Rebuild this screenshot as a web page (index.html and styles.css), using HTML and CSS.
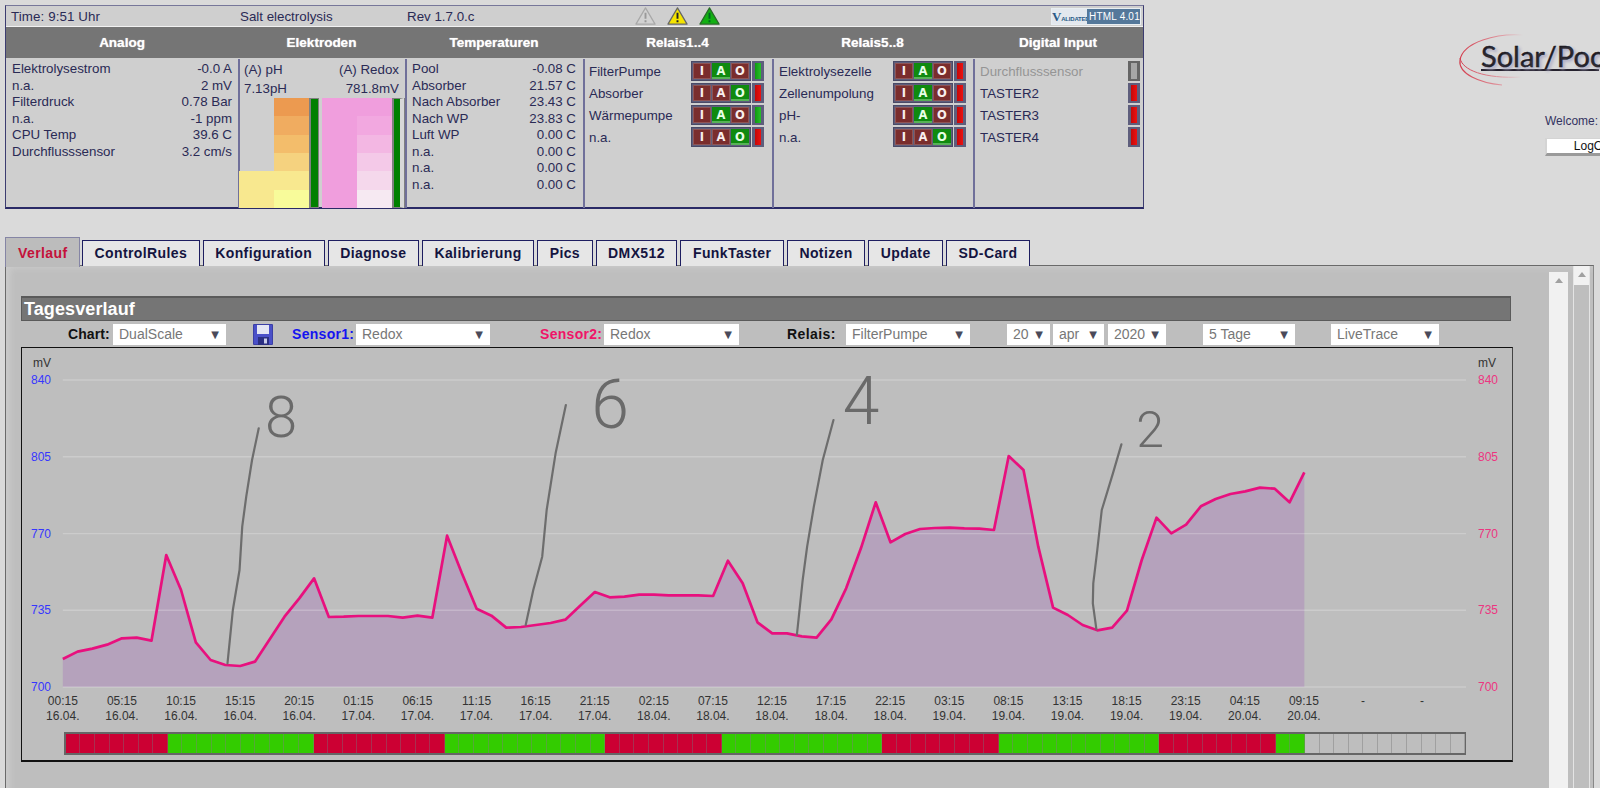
FILE: index.html
```html
<!DOCTYPE html>
<html lang="de">
<head>
<meta charset="utf-8">
<title>Salt electrolysis</title>
<link rel="stylesheet" href="styles.css">
</head>
<body>
<div class="top">
  <section class="panel">
    <div class="status">
      <span class="st-time">Time: 9:51 Uhr</span>
      <span class="st-name">Salt electrolysis</span>
      <span class="st-rev">Rev 1.7.0.c</span>
      <span class="st-icons">
        <svg class="tri" viewBox="0 0 22 20"><path d="M11 1.5 21 18.5H1Z" fill="#d2d2d2" stroke="#a8a8a8" stroke-width="1.3" stroke-linejoin="round"/><path d="M11 6.5V13M11 14.5V16.5" stroke="#999" stroke-width="2"/></svg>
        <svg class="tri" viewBox="0 0 22 20"><path d="M11 1.5 21 18.5H1Z" fill="#f5e400" stroke="#666" stroke-width="1.3" stroke-linejoin="round"/><path d="M11 6.5V13M11 14.5V16.5" stroke="#222" stroke-width="2"/></svg>
        <svg class="tri" viewBox="0 0 22 20"><path d="M11 1.5 21 18.5H1Z" fill="#12b012" stroke="#2a6a2a" stroke-width="1.3" stroke-linejoin="round"/><path d="M11 6.5V13M11 14.5V16.5" stroke="#062" stroke-width="2"/></svg>
      </span>
      <span class="valid"><span class="valid-l"><b>V</b>ALIDATED</span><span class="valid-r">HTML 4.01</span></span>
    </div>
    <div class="grid">
      <h3>Analog</h3><h3>Elektroden</h3><h3>Temperaturen</h3><h3>Relais1..4</h3><h3>Relais5..8</h3><h3>Digital Input</h3>

      <div class="cell values">
        <p><span>Elektrolysestrom</span><span>-0.0 A</span></p>
        <p><span>n.a.</span><span>2 mV</span></p>
        <p><span>Filterdruck</span><span>0.78 Bar</span></p>
        <p><span>n.a.</span><span>-1 ppm</span></p>
        <p><span>CPU Temp</span><span>39.6 C</span></p>
        <p><span>Durchflusssensor</span><span>3.2 cm/s</span></p>
      </div>

      <div class="cell electrodes">
        <p><span>(A) pH</span><span>(A) Redox</span></p>
        <p><span>7.13pH</span><span>781.8mV</span></p>
        <div class="bars">
          <div class="col"><i class="y5"></i><i class="y5"></i></div>
          <div class="col"><i class="y1"></i><i class="y2"></i><i class="y3"></i><i class="y4"></i><i class="y5"></i><i class="y6"></i></div>
          <div class="meter"></div>
          <div class="col col-r"><i class="p1"></i><i class="p1"></i><i class="p1"></i><i class="p1"></i><i class="p1"></i><i class="p1"></i></div>
          <div class="col"><i class="p1"></i><i class="p2"></i><i class="p3"></i><i class="p4"></i><i class="p5"></i><i class="p6"></i></div>
          <div class="meter meter-r"></div>
        </div>
      </div>

      <div class="cell values temps">
        <p><span>Pool</span><span>-0.08 C</span></p>
        <p><span>Absorber</span><span>21.57 C</span></p>
        <p><span>Nach Absorber</span><span>23.43 C</span></p>
        <p><span>Nach WP</span><span>23.83 C</span></p>
        <p><span>Luft WP</span><span>0.00 C</span></p>
        <p><span>n.a.</span><span>0.00 C</span></p>
        <p><span>n.a.</span><span>0.00 C</span></p>
        <p><span>n.a.</span><span>0.00 C</span></p>
      </div>

      <div class="cell relays">
        <div class="rel"><span class="rel-name">FilterPumpe</span><span class="iao"><b>I</b><b class="on">A</b><b>O</b></span><span class="led green"></span></div>
        <div class="rel"><span class="rel-name">Absorber</span><span class="iao"><b>I</b><b>A</b><b class="on">O</b></span><span class="led red"></span></div>
        <div class="rel"><span class="rel-name">Wärmepumpe</span><span class="iao"><b>I</b><b class="on">A</b><b>O</b></span><span class="led green"></span></div>
        <div class="rel"><span class="rel-name">n.a.</span><span class="iao"><b>I</b><b>A</b><b class="on">O</b></span><span class="led red"></span></div>
      </div>

      <div class="cell relays rel-b">
        <div class="rel"><span class="rel-name">Elektrolysezelle</span><span class="iao"><b>I</b><b class="on">A</b><b>O</b></span><span class="led red"></span></div>
        <div class="rel"><span class="rel-name">Zellenumpolung</span><span class="iao"><b>I</b><b class="on">A</b><b>O</b></span><span class="led red"></span></div>
        <div class="rel"><span class="rel-name">pH-</span><span class="iao"><b>I</b><b class="on">A</b><b>O</b></span><span class="led red"></span></div>
        <div class="rel"><span class="rel-name">n.a.</span><span class="iao"><b>I</b><b>A</b><b class="on">O</b></span><span class="led red"></span></div>
      </div>

      <div class="cell relays digital">
        <div class="rel"><span class="rel-name off">Durchflusssensor</span><span class="led gray"></span></div>
        <div class="rel"><span class="rel-name">TASTER2</span><span class="led red"></span></div>
        <div class="rel"><span class="rel-name">TASTER3</span><span class="led red"></span></div>
        <div class="rel"><span class="rel-name">TASTER4</span><span class="led red"></span></div>
      </div>
    </div>
  </section>

  <aside class="side">
    <svg class="logo" viewBox="0 0 142 60" width="142" height="60">
      <defs>
        <linearGradient id="arc" x1="0" x2="1" y1="0" y2="0"><stop offset="0" stop-color="#d33c4c"/><stop offset=".7" stop-color="#e0a0a8"/><stop offset="1" stop-color="#dadada"/></linearGradient>
      </defs>
      <path d="M66 1C40-1 6 8 3 26c-2 14 20 23 42 25" fill="none" stroke="url(#arc)" stroke-width="1.1"/>
      <path d="M3 24c2 12 24 21 62 19" fill="none" stroke="url(#arc)" stroke-width="1"/>
      <rect x="24" y="35" width="118" height="2" fill="#26222e"/>
      <text x="24" y="33" class="logo-text">Solar/Pool</text>
    </svg>
    <div class="welcome">Welcome:</div>
    <div class="logout">LogOut</div>
  </aside>
</div>

<nav class="tabs">
  <a class="tab active">Verlauf</a>
  <a class="tab">ControlRules</a>
  <a class="tab">Konfiguration</a>
  <a class="tab">Diagnose</a>
  <a class="tab">Kalibrierung</a>
  <a class="tab">Pics</a>
  <a class="tab">DMX512</a>
  <a class="tab">FunkTaster</a>
  <a class="tab">Notizen</a>
  <a class="tab">Update</a>
  <a class="tab">SD-Card</a>
</nav>

<main class="content">
  <div class="inner">
    <h2 class="title">Tagesverlauf</h2>
    <div class="toolbar">
      <label class="lbl l-chart">Chart:</label>
      <span class="sel s-chart">DualScale<i>▼</i></span>
      <svg class="disk" viewBox="0 0 20 21"><rect width="20" height="21" rx="1" fill="#3b3fa6"/><rect x="1" y="1" width="18" height="19" fill="#4a50c8"/><rect x="4" y="1" width="12" height="9" fill="#e4e6f4"/><rect x="5" y="13" width="11" height="8" fill="#2b2f82"/><rect x="11" y="14.5" width="3" height="5" fill="#c8cbe8"/></svg>
      <label class="lbl blue l-s1">Sensor1:</label>
      <span class="sel s-s1">Redox<i>▼</i></span>
      <label class="lbl pink l-s2">Sensor2:</label>
      <span class="sel s-s2">Redox<i>▼</i></span>
      <label class="lbl l-rel">Relais:</label>
      <span class="sel s-rel">FilterPumpe<i>▼</i></span>
      <span class="sel s-day">20<i>▼</i></span>
      <span class="sel s-mon">apr<i>▼</i></span>
      <span class="sel s-year">2020<i>▼</i></span>
      <span class="sel s-span">5 Tage<i>▼</i></span>
      <span class="sel s-live">LiveTrace<i>▼</i></span>
    </div>

    <div class="chart">
      <svg class="plot" viewBox="22 348 1489 384" width="1489" height="384">
        <polygon class="area" transform="translate(62.8 370) scale(14.78 .33333)" points="0,951 0,867 1,845 2,836 3,824 4,805 5,803 6,812 7,555 8,660 9,817 10,870 11,885 12,888 13,875 14,808 15,740 16,685 17,625 18,741 19,740 20,738 21,738 22,738 23,743 24,737 25,743 26,497 27,610 28,716 29,737 30,773 31,771 32,765 33,759 34,749 35,707 36,666 37,682 38,680 39,674 40,674 41,676 42,676 43,676 44,678 45,572 46,640 47,757 48,790 49,790 50,799 51,803 52,748 53,655 54,535 55,397 56,517 57,492 58,477 59,474 60,473 61,475 62,476 63,480 64,258 65,300 66,530 67,713 68,735 69,765 70,781 71,773 72,722 73,570 74,443 75,490 76,464 77,409 78,387 79,372 80,364 81,353 82,356 83,397 84,307 84,951"/>
        <g class="grid-lines">
          <line x1="62.8" x2="1466" y1="380" y2="380"/>
          <line x1="62.8" x2="1466" y1="456.7" y2="456.7"/>
          <line x1="62.8" x2="1466" y1="533.6" y2="533.6"/>
          <line x1="62.8" x2="1466" y1="610.3" y2="610.3"/>
          <line x1="62.8" x2="1466" y1="687" y2="687"/>
        </g>
        <polyline class="line" transform="translate(62.8 370) scale(14.78 .33333)" points="0,867 1,845 2,836 3,824 4,805 5,803 6,812 7,555 8,660 9,817 10,870 11,885 12,888 13,875 14,808 15,740 16,685 17,625 18,741 19,740 20,738 21,738 22,738 23,743 24,737 25,743 26,497 27,610 28,716 29,737 30,773 31,771 32,765 33,759 34,749 35,707 36,666 37,682 38,680 39,674 40,674 41,676 42,676 43,676 44,678 45,572 46,640 47,757 48,790 49,790 50,799 51,803 52,748 53,655 54,535 55,397 56,517 57,492 58,477 59,474 60,473 61,475 62,476 63,480 64,258 65,300 66,530 67,713 68,735 69,765 70,781 71,773 72,722 73,570 74,443 75,490 76,464 77,409 78,387 79,372 80,364 81,353 82,356 83,397 84,307"/>

        <g class="pencil">
          <path transform="translate(40 370) scale(.4464 .33333)" d="M490 175 475 270 462 380 453 470 447 600 432 720 420 880"/>
          <path transform="translate(40 370) scale(.4464 .33333)" d="M1178 105 1155 250 1135 420 1125 560 1105 660 1088 765"/>
          <path transform="translate(700 370) scale(.4464 .33333)" d="M299 150 275 270 255 410 240 530 230 630 217 795"/>
          <path transform="translate(700 370) scale(.4464 .33333)" d="M944 223 925 310 900 420 890 540 881 640 880 700 888 778"/>
        </g>
        <text class="hand d8" x="281" y="437">8</text>
        <text class="hand d6" x="610" y="428">6</text>
        <text class="hand d4" x="861" y="424">4</text>
        <text class="hand d2" x="1150" y="447">2</text>

        <text class="unit" x="33" y="367">mV</text>
        <text class="unit" x="1478" y="367">mV</text>
        <g class="ax-l">
          <text x="51" y="384">840</text><text x="51" y="461">805</text><text x="51" y="538">770</text><text x="51" y="614">735</text><text x="51" y="691">700</text>
        </g>
        <g class="ax-r">
          <text x="1478" y="384">840</text><text x="1478" y="461">805</text><text x="1478" y="538">770</text><text x="1478" y="614">735</text><text x="1478" y="691">700</text>
        </g>
        <g class="ax-x">
          <text x="62.8" y="705">00:15</text><text x="62.8" y="720">16.04.</text>
          <text x="121.9" y="705">05:15</text><text x="121.9" y="720">16.04.</text>
          <text x="181" y="705">10:15</text><text x="181" y="720">16.04.</text>
          <text x="240.1" y="705">15:15</text><text x="240.1" y="720">16.04.</text>
          <text x="299.2" y="705">20:15</text><text x="299.2" y="720">16.04.</text>
          <text x="358.3" y="705">01:15</text><text x="358.3" y="720">17.04.</text>
          <text x="417.4" y="705">06:15</text><text x="417.4" y="720">17.04.</text>
          <text x="476.5" y="705">11:15</text><text x="476.5" y="720">17.04.</text>
          <text x="535.6" y="705">16:15</text><text x="535.6" y="720">17.04.</text>
          <text x="594.7" y="705">21:15</text><text x="594.7" y="720">17.04.</text>
          <text x="653.8" y="705">02:15</text><text x="653.8" y="720">18.04.</text>
          <text x="712.9" y="705">07:15</text><text x="712.9" y="720">18.04.</text>
          <text x="772" y="705">12:15</text><text x="772" y="720">18.04.</text>
          <text x="831.1" y="705">17:15</text><text x="831.1" y="720">18.04.</text>
          <text x="890.2" y="705">22:15</text><text x="890.2" y="720">18.04.</text>
          <text x="949.3" y="705">03:15</text><text x="949.3" y="720">19.04.</text>
          <text x="1008.4" y="705">08:15</text><text x="1008.4" y="720">19.04.</text>
          <text x="1067.5" y="705">13:15</text><text x="1067.5" y="720">19.04.</text>
          <text x="1126.6" y="705">18:15</text><text x="1126.6" y="720">19.04.</text>
          <text x="1185.7" y="705">23:15</text><text x="1185.7" y="720">19.04.</text>
          <text x="1244.8" y="705">04:15</text><text x="1244.8" y="720">20.04.</text>
          <text x="1303.9" y="705">09:15</text><text x="1303.9" y="720">20.04.</text>
          <text x="1363" y="705">-</text>
          <text x="1422.1" y="705">-</text>
        </g>
      </svg>
      <div class="relay-strip">
        <i class="r"></i><i class="r"></i><i class="r"></i><i class="r"></i><i class="r"></i><i class="r"></i><i class="r"></i>
        <i class="g"></i><i class="g"></i><i class="g"></i><i class="g"></i><i class="g"></i><i class="g"></i><i class="g"></i><i class="g"></i><i class="g"></i><i class="g"></i>
        <i class="r"></i><i class="r"></i><i class="r"></i><i class="r"></i><i class="r"></i><i class="r"></i><i class="r"></i><i class="r"></i><i class="r"></i>
        <i class="g"></i><i class="g"></i><i class="g"></i><i class="g"></i><i class="g"></i><i class="g"></i><i class="g"></i><i class="g"></i><i class="g"></i><i class="g"></i><i class="g"></i>
        <i class="r"></i><i class="r"></i><i class="r"></i><i class="r"></i><i class="r"></i><i class="r"></i><i class="r"></i><i class="r"></i>
        <i class="g"></i><i class="g"></i><i class="g"></i><i class="g"></i><i class="g"></i><i class="g"></i><i class="g"></i><i class="g"></i><i class="g"></i><i class="g"></i><i class="g"></i>
        <i class="r"></i><i class="r"></i><i class="r"></i><i class="r"></i><i class="r"></i><i class="r"></i><i class="r"></i><i class="r"></i>
        <i class="g"></i><i class="g"></i><i class="g"></i><i class="g"></i><i class="g"></i><i class="g"></i><i class="g"></i><i class="g"></i><i class="g"></i><i class="g"></i><i class="g"></i>
        <i class="r"></i><i class="r"></i><i class="r"></i><i class="r"></i><i class="r"></i><i class="r"></i><i class="r"></i><i class="r"></i>
        <i class="g"></i><i class="g"></i>
        <i></i><i></i><i></i><i></i><i></i><i></i><i></i><i></i><i></i><i></i><i></i>
      </div>
    </div>
  </div>
  <div class="sb sb-inner"><span class="sb-up"></span></div>
  <div class="sb sb-outer"><span class="sb-up"></span></div>
</main>
</body>
</html>
```

FILE: styles.css
```css
* { box-sizing: border-box; }
html, body { margin: 0; height: 788px; overflow: hidden; }
body {
  background: #dadada;
  font-family: "Liberation Sans", Arial, sans-serif;
  font-size: 13.33px;
  color: #2a2a55;
  padding: 5px 6px 0 5px;
}
p, h2, h3 { margin: 0; font-weight: normal; }

/* top block */
.top { display: flex; height: 204px; }
.panel {
  width: 1139px;
  flex: none;
  height: 204px;
  background: #cfcfcf;
  border: 1px solid #3c3c70;
  border-top-color: #77779a;
  border-bottom-width: 2px;
  border-bottom-color: #2a2a66;
  display: flex;
  flex-direction: column;
}
.status {
  height: 20px;
  display: flex;
  align-items: center;
  flex: none;
}
.st-time { margin-left: 5px; width: 229px; letter-spacing: .1px; }
.st-name { width: 167px; }
.st-rev { width: 228px; }
.st-icons { display: flex; gap: 11px; }
.tri { width: 21px; height: 20px; display: block; }
.valid {
  margin-left: auto;
  margin-right: 2px;
  width: 90px;
  height: 17px;
  display: flex;
  border: 1px solid #e8eef2;
  background: #5d7f9d;
  font-size: 10px;
  line-height: 15px;
  color: #fff;
  white-space: nowrap;
  overflow: hidden;
}
.valid-l { width: 35px; background: #e3e8ee; color: #2a5a88; font-size: 6px; font-weight: bold; letter-spacing: -.2px; flex: none; }
.valid-l b { font-size: 13px; font-family: "Liberation Serif", serif; }
.valid-r { flex: 1; padding-left: 2px; background: #54789a; letter-spacing: .2px; }

.grid {
  flex: 1;
  display: grid;
  grid-template-columns: 232px 167px 178px 189px 201px 170px;
  grid-template-rows: 32px 1fr;
  border-top: 1px solid #f2f2f2;
  min-height: 0;
}
.grid h3 {
  background: #757575;
  color: #fff;
  font-weight: bold;
  font-size: 13.5px;
  text-align: center;
  line-height: 32px;
  height: 31px;
  text-shadow: 0 0 1px #ddd;
}
.cell { border-left: 2px solid #70709a; padding-top: 1px; min-width: 0; }
.cell:nth-child(7) { border-left: 0; }

.values { padding: 2px 6px 0 6px; line-height: 16.5px; }
.values p { display: flex; justify-content: space-between; white-space: nowrap; }
.temps { padding: 2px 7px 0 5px; }

.electrodes { padding: 1px 0 0 0; }
.electrodes p { display: flex; justify-content: space-between; padding: 0 6px 0 4px; line-height: 19px; height: 19px; }
.bars {
  height: 110px;
  display: flex;
  align-items: stretch;
  margin: 0 0 0 -1px;
}
.col { width: 35px; display: flex; flex-direction: column; justify-content: flex-end; }
.col i { display: block; height: 18.33px; flex: none; }
.col-r { margin-left: 3px; }
.y1 { background: #ec9a50; }
.y2 { background: #f0ac60; }
.y3 { background: #f3bd6b; }
.y4 { background: #f5d27f; }
.y5 { background: #f8e88f; }
.y6 { background: #f8fb9a; }
.p1 { background: #f09edd; }
.p2 { background: #f2a8e0; }
.p3 { background: #f3b7e3; }
.p4 { background: #f4c9e8; }
.p5 { background: #f5d8ec; }
.p6 { background: #f6e9f2; }
.meter {
  width: 10px;
  background: #008000;
  border: 1px solid #808080;
  border-left-width: 2px;
  flex: none;
}
.meter-r {
  width: 12px;
  border-right: 4px solid #d8d8d8;
  box-shadow: 1px 0 0 #808080;
}

.relays { padding: 1px 0 0 3px; }
.rel { height: 22px; display: flex; align-items: center; }
.rel-name { width: 102px; white-space: nowrap; margin-left: 1px; }
.rel-b { padding-left: 4px; }
.rel-b .rel-name { width: 114px; }
.digital .rel-name { flex: 1; margin-left: 2px; }
.off { color: #959595; }
.iao {
  width: 60px;
  height: 20px;
  display: flex;
  gap: 1px;
  padding: 1px;
  background: #5e5e7c;
  border: 1px solid #4a4a66;
}
.iao b {
  flex: 1;
  background: #7a2d2d;
  color: #f8eeee;
  font-family: "DejaVu Sans", Verdana, sans-serif;
  font-size: 11.5px;
  line-height: 16px;
  text-align: center;
  box-shadow: inset 0 0 0 1px #8f5454;
}
.iao b.on {
  background: #0f8a0f;
  color: #e8ffe8;
  box-shadow: inset 0 -2px 0 #57b257;
}
.led {
  width: 12px;
  height: 20px;
  margin-left: 1px;
  border: 2px solid #5e5e7c;
  border-width: 2px 3px;
  outline: 0;
  flex: none;
}
.led.green { background: linear-gradient(90deg, #109a10, #29c02c); }
.led.red { background: linear-gradient(90deg, #c40808, #ec1212); }
.led.gray { background: #a6a6a6; border-color: #656565; }
.digital .led { margin-right: 3px; }

.side { position: relative; flex: 1; padding-left: 313px; padding-top: 29px; }
.logo { display: block; margin-left: 0; overflow: visible; }
.logo-text {
  font-family: Lato, "Open Sans", sans-serif;
  font-size: 29px;
  fill: #17151c;
  stroke: #17151c;
  stroke-width: .4px;
  text-shadow: 2px 2px 3px #a9a9c4;
}
.welcome { margin: 20px 0 0 88px; font-size: 12px; color: #33335f; white-space: nowrap; }
.logout {
  margin: 10px 0 0 88px;
  width: 98px;
  height: 18px;
  background: #fff;
  border: 3px solid #d4d4d4;
  border-bottom-color: #9a9a9a;
  border-top-width: 1px;
  border-left-width: 2px;
  font-size: 12px;
  line-height: 14px;
  color: #111;
  text-align: center;
  white-space: nowrap;
}

/* tabs */
.tabs {
  display: flex;
  align-items: flex-end;
  gap: 3px;
  height: 31px;
  margin-top: 26px;
  position: relative;
  z-index: 1;
}
.tab {
  height: 26px;
  padding: 0 11.5px;
  background: #e6e6e6;
  border: 1px solid #1e1e60;
  border-bottom: 0;
  font-weight: bold;
  font-size: 14px;
  letter-spacing: .4px;
  line-height: 25px;
  color: #14143f;
  white-space: nowrap;
}
.tab.active {
  height: 30px;
  padding: 0 12px;
  width: 75px;
  margin-right: -1px;
  background: #bcbcbc;
  border: 1px solid #8585a5;
  border-bottom: 0;
  color: #c4123a;
  line-height: 30px;
  margin-bottom: -1px;
}

/* content */
.content {
  height: 530px;
  margin-top: -1px;
  width: 1589px;
  background: #bebebe;
  border: 1px solid #6a6a6a;
  border-right-color: #888;
  border-bottom: 0;
  display: flex;
  box-shadow: inset 8px 6px 6px -4px #cbcbcb;
}
.inner { width: 1506px; flex: none; padding: 30px 0 0 15px; }
.title {
  height: 25px;
  width: 1490px;
  background: #757575;
  border: 2px solid #5a5a5a;
  border-width: 2px 1px 1px 1px;
  color: #fff;
  font-size: 18px;
  font-weight: bold;
  line-height: 22px;
  padding-left: 2px;
  letter-spacing: .1px;
}
.toolbar { display: flex; align-items: center; height: 24px; padding-top: 2px; }
.lbl { font-weight: bold; font-size: 14px; color: #111; white-space: nowrap; letter-spacing: .1px; }
.blue { color: #1414f0; letter-spacing: .3px; }
.pink { color: #f01468; letter-spacing: .3px; }
.sel {
  display: flex;
  justify-content: space-between;
  align-items: center;
  flex: none;
  height: 21px;
  background: #fff;
  color: #777;
  font-size: 14px;
  padding: 0 7px 0 6px;
  white-space: nowrap;
}
.sel i {
  font-style: normal;
  font-family: "DejaVu Sans", sans-serif;
  font-size: 10px;
  color: #4a4a5a;
}
.l-chart { margin-left: 47px; width: 41px; }
.s-chart { margin-left: 4px; width: 113px; }
.disk { width: 20px; height: 21px; margin-left: 27px; flex: none; display: block; }
.l-s1 { margin-left: 19px; width: 61px; }
.s-s1 { margin-left: 3px; width: 134px; }
.l-s2 { margin-left: 50px; width: 61px; }
.s-s2 { margin-left: 3px; width: 135px; }
.l-rel { margin-left: 48px; width: 50px; letter-spacing: .4px; }
.s-rel { margin-left: 9px; width: 124px; }
.s-day { margin-left: 37px; width: 43px; }
.s-mon { margin-left: 3px; width: 51px; }
.s-year { margin-left: 4px; width: 58px; }
.s-span { margin-left: 37px; width: 92px; }
.s-live { margin-left: 36px; width: 108px; }

.chart {
  margin-top: 2px;
  width: 1492px;
  height: 415px;
  border: 1px solid #111;
  border-bottom-width: 2px;
  border-right-color: #444;
}
.plot { display: block; }
.area { fill: #b5a2bc; }
.grid-lines line { stroke: #fff; stroke-opacity: .22; stroke-width: 1.4; }
.line {
  fill: none;
  stroke: #e8107e;
  stroke-width: 2.7;
  stroke-linejoin: round;
  vector-effect: non-scaling-stroke;
}
.pencil path {
  fill: none;
  stroke: #6d6d6d;
  stroke-width: 2.2;
  stroke-linecap: round;
  stroke-linejoin: round;
  vector-effect: non-scaling-stroke;
}
.plot text { font-size: 12px; }
.plot .hand { font-family: Roboto, sans-serif; font-weight: 300; fill: #6a6a6a; text-anchor: middle; }
.plot .d8 { font-size: 58px; }
.plot .d6 { font-size: 68px; }
.plot .d4 { font-size: 66px; }
.plot .d2 { font-size: 50px; }
.unit { fill: #333; }
.ax-l text { fill: #3636ff; text-anchor: end; }
.ax-r text { fill: #ec3580; }
.ax-x text { fill: #333; text-anchor: middle; }

.relay-strip {
  margin-left: 41.8px;
  width: 1402px;
  height: 23px;
  display: flex;
  background: #bebebe;
  border: 2px solid #666;
  border-width: 2px 1px 2px 2px;
}
.relay-strip i { flex: 1; border-right: 1px solid #a0a0a0; }
.relay-strip .r { background: #cc0033; border-right-color: #a83050; }
.relay-strip .g { background: #33cc00; border-right-color: #55a838; }

.sb { flex: none; height: 100%; }
.sb-up { display: block; position: relative; height: 19px; }
.sb-up::after {
  content: "";
  position: absolute;
  left: 50%;
  top: 6px;
  margin-left: -4px;
  border: 4px solid transparent;
  border-top: 0;
  border-bottom: 5px solid #a0a0a0;
}
.sb-inner {
  width: 19px;
  margin: 6px 0 0 37px;
  background: #f1f1f1;
}
.sb-outer {
  width: 17px;
  margin-left: 5px;
  background: #bebebe;
  border-left: 1px solid #e4e4e4;
  border-right: 1px solid #e4e4e4;
}
.sb-outer .sb-up { background: #f1f1f1; height: 19px; }
```
